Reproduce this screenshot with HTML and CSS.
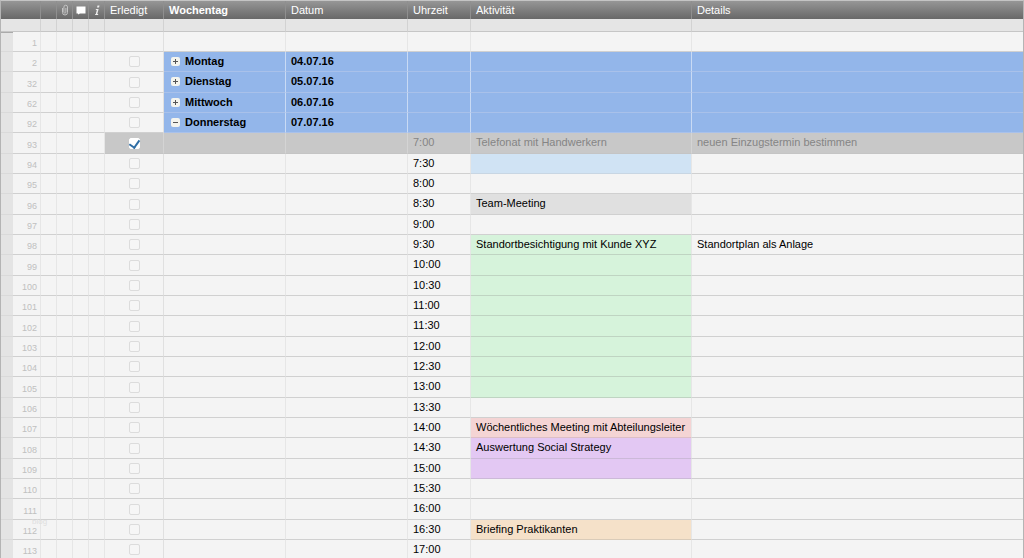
FILE: index.html
```html
<!DOCTYPE html>
<html lang="de">
<head>
    <meta charset="UTF-8">
    <meta name="viewport" content="width=device-width, initial-scale=1.0">
    <title>Wochenplan</title>
    <link rel="stylesheet" href="styles.css">
</head>
<body>
    <div class="sheet">
        <table class="grid">
            <colgroup>
                <col class="col-handle"><col class="col-number"><col class="col-icon"><col class="col-icon"><col class="col-icon"><col class="col-icon">
                <col class="col-done"><col class="col-day"><col class="col-date"><col class="col-time"><col class="col-activity"><col>
            </colgroup>
            <thead>
                <tr class="head">
                    <th colspan="2"></th>
                    <th></th>
                    <th class="icon"><svg width="8" height="12" viewBox="0 0 8 12"><path d="M1.5 4v4.5a2.5 2.5 0 0 0 5 0V3a1.8 1.8 0 0 0-3.6 0v5.200a1 1 0 0 0 2 0V4" fill="none" stroke="#c4c4c4"/></svg></th>
                    <th class="icon"><svg width="10" height="10" viewBox="0 0 10 10"><path d="M0.500 1.500h9v7H4L2 9.500v-1H0.500z" fill="#fff"/></svg></th>
                    <th class="icon"><svg width="6" height="11" viewBox="0 0 6 11"><path d="M3.500 0.500h2L5 2.500H3zM2 4h2.600L3.300 9H4.300L4 10H1l0.300-1h0.500L2.800 5H1.700z" fill="#eee"/></svg></th>
                    <th>Erledigt</th>
                    <th class="primary">Wochentag</th>
                    <th>Datum</th>
                    <th>Uhrzeit</th>
                    <th>Aktivität</th>
                    <th>Details</th>
                </tr>
                <tr class="filter"><td colspan="2"></td><td></td><td></td><td></td><td></td><td></td><td></td><td></td><td></td><td></td><td></td></tr>
            </thead>
            <tbody>
                <tr class="first"><td></td><td>1</td><td></td><td></td><td></td><td></td><td></td><td></td><td></td><td></td><td></td><td></td></tr>
                <tr class="day"><td></td><td>2</td><td></td><td></td><td></td><td></td><td><input type="checkbox" aria-label="Erledigt"></td><td><button class="toggle" aria-label="Aufklappen"><svg width="9" height="9" viewBox="0 0 9 9"><path d="M4.500 2v5M2 4.500h5"/></svg></button>Montag</td><td>04.07.16</td><td></td><td></td><td></td></tr>
                <tr class="day"><td></td><td>32</td><td></td><td></td><td></td><td></td><td><input type="checkbox" aria-label="Erledigt"></td><td><button class="toggle" aria-label="Aufklappen"><svg width="9" height="9" viewBox="0 0 9 9"><path d="M4.500 2v5M2 4.500h5"/></svg></button>Dienstag</td><td>05.07.16</td><td></td><td></td><td></td></tr>
                <tr class="day"><td></td><td>62</td><td></td><td></td><td></td><td></td><td><input type="checkbox" aria-label="Erledigt"></td><td><button class="toggle" aria-label="Aufklappen"><svg width="9" height="9" viewBox="0 0 9 9"><path d="M4.500 2v5M2 4.500h5"/></svg></button>Mittwoch</td><td>06.07.16</td><td></td><td></td><td></td></tr>
                <tr class="day"><td></td><td>92</td><td></td><td></td><td></td><td></td><td><input type="checkbox" aria-label="Erledigt"></td><td><button class="toggle" aria-label="Zuklappen"><svg width="9" height="9" viewBox="0 0 9 9"><path d="M2 4.500h5"/></svg></button>Donnerstag</td><td>07.07.16</td><td></td><td></td><td></td></tr>
                <tr class="done"><td></td><td>93</td><td></td><td></td><td></td><td></td><td><input type="checkbox" aria-label="Erledigt" checked></td><td></td><td></td><td>7:00</td><td>Telefonat mit Handwerkern</td><td>neuen Einzugstermin bestimmen</td></tr>
                <tr><td></td><td>94</td><td></td><td></td><td></td><td></td><td><input type="checkbox" aria-label="Erledigt"></td><td></td><td></td><td>7:30</td><td class="blue"></td><td></td></tr>
                <tr><td></td><td>95</td><td></td><td></td><td></td><td></td><td><input type="checkbox" aria-label="Erledigt"></td><td></td><td></td><td>8:00</td><td></td><td></td></tr>
                <tr><td></td><td>96</td><td></td><td></td><td></td><td></td><td><input type="checkbox" aria-label="Erledigt"></td><td></td><td></td><td>8:30</td><td class="gray">Team-Meeting</td><td></td></tr>
                <tr><td></td><td>97</td><td></td><td></td><td></td><td></td><td><input type="checkbox" aria-label="Erledigt"></td><td></td><td></td><td>9:00</td><td></td><td></td></tr>
                <tr><td></td><td>98</td><td></td><td></td><td></td><td></td><td><input type="checkbox" aria-label="Erledigt"></td><td></td><td></td><td>9:30</td><td class="green">Standortbesichtigung mit Kunde XYZ</td><td>Standortplan als Anlage</td></tr>
                <tr><td></td><td>99</td><td></td><td></td><td></td><td></td><td><input type="checkbox" aria-label="Erledigt"></td><td></td><td></td><td>10:00</td><td class="green"></td><td></td></tr>
                <tr><td></td><td>100</td><td></td><td></td><td></td><td></td><td><input type="checkbox" aria-label="Erledigt"></td><td></td><td></td><td>10:30</td><td class="green"></td><td></td></tr>
                <tr><td></td><td>101</td><td></td><td></td><td></td><td></td><td><input type="checkbox" aria-label="Erledigt"></td><td></td><td></td><td>11:00</td><td class="green"></td><td></td></tr>
                <tr><td></td><td>102</td><td></td><td></td><td></td><td></td><td><input type="checkbox" aria-label="Erledigt"></td><td></td><td></td><td>11:30</td><td class="green"></td><td></td></tr>
                <tr><td></td><td>103</td><td></td><td></td><td></td><td></td><td><input type="checkbox" aria-label="Erledigt"></td><td></td><td></td><td>12:00</td><td class="green"></td><td></td></tr>
                <tr><td></td><td>104</td><td></td><td></td><td></td><td></td><td><input type="checkbox" aria-label="Erledigt"></td><td></td><td></td><td>12:30</td><td class="green"></td><td></td></tr>
                <tr><td></td><td>105</td><td></td><td></td><td></td><td></td><td><input type="checkbox" aria-label="Erledigt"></td><td></td><td></td><td>13:00</td><td class="green"></td><td></td></tr>
                <tr><td></td><td>106</td><td></td><td></td><td></td><td></td><td><input type="checkbox" aria-label="Erledigt"></td><td></td><td></td><td>13:30</td><td></td><td></td></tr>
                <tr><td></td><td>107</td><td></td><td></td><td></td><td></td><td><input type="checkbox" aria-label="Erledigt"></td><td></td><td></td><td>14:00</td><td class="red">Wöchentliches Meeting mit Abteilungsleiter</td><td></td></tr>
                <tr><td></td><td>108</td><td></td><td></td><td></td><td></td><td><input type="checkbox" aria-label="Erledigt"></td><td></td><td></td><td>14:30</td><td class="purple">Auswertung Social Strategy</td><td></td></tr>
                <tr><td></td><td>109</td><td></td><td></td><td></td><td></td><td><input type="checkbox" aria-label="Erledigt"></td><td></td><td></td><td>15:00</td><td class="purple"></td><td></td></tr>
                <tr><td></td><td>110</td><td></td><td></td><td></td><td></td><td><input type="checkbox" aria-label="Erledigt"></td><td></td><td></td><td>15:30</td><td></td><td></td></tr>
                <tr><td></td><td>111</td><td></td><td></td><td></td><td></td><td><input type="checkbox" aria-label="Erledigt"></td><td></td><td></td><td>16:00</td><td></td><td></td></tr>
                <tr><td></td><td>112</td><td></td><td></td><td></td><td></td><td><input type="checkbox" aria-label="Erledigt"></td><td></td><td></td><td>16:30</td><td class="orange">Briefing Praktikanten</td><td></td></tr>
                <tr><td></td><td>113</td><td></td><td></td><td></td><td></td><td><input type="checkbox" aria-label="Erledigt"></td><td></td><td></td><td>17:00</td><td></td><td></td></tr>
            </tbody>
        </table>
        <span class="watermark">blog</span>
    </div>
</body>
</html>
```
FILE: styles.css
```css
* {
    box-sizing: border-box;
}

body {
    margin: 0;
    height: 100vh;
    overflow: hidden;
    background: #f4f4f4;
    font-family: 'Liberation Sans', Arial, sans-serif;
    font-size: 11px;
    line-height: 14px;
    color: #000;
}

.sheet {
    position: relative;
    border-top: 1px solid #c4c4c4;
    border-left: 1px solid #b4b4b4;
    border-right: 1px solid #b4b4b4;
}

.grid {
    width: 100%;
    table-layout: fixed;
    border-collapse: separate;
    border-spacing: 0;
}

.col-handle { width: 12px; }
.col-number { width: 28px; }
.col-icon { width: 16px; }
.col-done { width: 59px; }
.col-day { width: 122px; }
.col-date { width: 122px; }
.col-time { width: 63px; }
.col-activity { width: 221px; }

th,
td {
    padding: 0 5px;
    text-align: left;
    white-space: nowrap;
    overflow: hidden;
    vertical-align: middle;
    border-right: 1px solid #e6e6e6;
}

th:last-child,
td:last-child {
    border-right: none;
}

/* header */
.head {
    height: 18px;
    background: linear-gradient(#969696, #686868);
}

.head th {
    font-weight: normal;
    color: #fff;
    border-right-color: #8f8f8f;
}

.head .primary {
    font-weight: bold;
}

.head .icon {
    padding: 0;
    text-align: center;
}

.head svg {
    display: block;
    margin: 0 auto;
}

.filter {
    height: 13px;
}

.filter td {
    background: #e5e5e5;
    border-right-color: #d2d2d2;
    border-bottom: 1px solid #c6c6c6;
}

/* rows */
tbody tr {
    height: 20px;
}

tbody tr:nth-child(3n) {
    height: 21px;
}

tbody td {
    padding-bottom: 2px;
    border-bottom: 1px solid #d0d0d0;
}

tbody td:nth-child(1) {
    background: #e4e4e4;
    border-right: none;
    border-bottom-color: #dadada;
}

tbody td:nth-child(2) {
    padding: 3px 3px 0 0;
    font-size: 9px;
    text-align: right;
    color: #c0c0c0;
}

tbody td:nth-child(7) {
    padding: 0;
    text-align: center;
    border-right-color: #e0e0e0;
}

.first td:first-child {
    border-top: 1px solid #aaa;
}

input[type="checkbox"] {
    appearance: none;
    display: block;
    width: 11px;
    height: 11px;
    margin: 0 auto;
    background: #f6f6f6;
    border: 1px solid #dcdcdc;
    border-radius: 2px;
}

input[type="checkbox"]:checked {
    background: #fff;
    border-color: #fff;
}

input[type="checkbox"]:checked::after {
    content: '';
    display: block;
    width: 5px;
    height: 8px;
    margin: 0 auto;
    border: solid #2f6ea5;
    border-width: 0 2px 2px 0;
    transform: translateY(-1px) rotate(35deg);
}

.day td:nth-child(n+8) {
    font-weight: bold;
    background: #93b6ea;
    border-right-color: #c9daf4;
    border-bottom-color: #a9c1ea;
}

.day td:nth-child(8) {
    padding-left: 7px;
}

.toggle {
    width: 9px;
    height: 9px;
    margin: 0 5px 0 0;
    padding: 0;
    border: none;
    border-radius: 2px;
    background: #f4f4ee;
    vertical-align: -1px;
}

.toggle svg {
    display: block;
    stroke: #555;
    stroke-width: 1;
}

.done td:nth-child(n+7) {
    background: #c8c8c8;
    color: #858585;
    border-right-color: #d4d4d4;
    border-bottom-color: #c4c4c4;
}

tbody .blue { background: #d0e3f4; border-bottom-color: #c8d6e3; }
tbody .gray { background: #e0e0e0; }
tbody .green { background: #d6f3db; border-bottom-color: #bfd4c2; }
tbody .red { background: #f4d4d4; border-bottom-color: #ddbfc6; }
tbody .purple { background: #e3c8f3; border-bottom-color: #ccb9d8; }
tbody .orange { background: #f5e1c9; border-bottom-color: #d9cbb9; }

.watermark {
    position: absolute;
    top: 514px;
    left: 31px;
    font-size: 8px;
    color: #dedede;
}
```
